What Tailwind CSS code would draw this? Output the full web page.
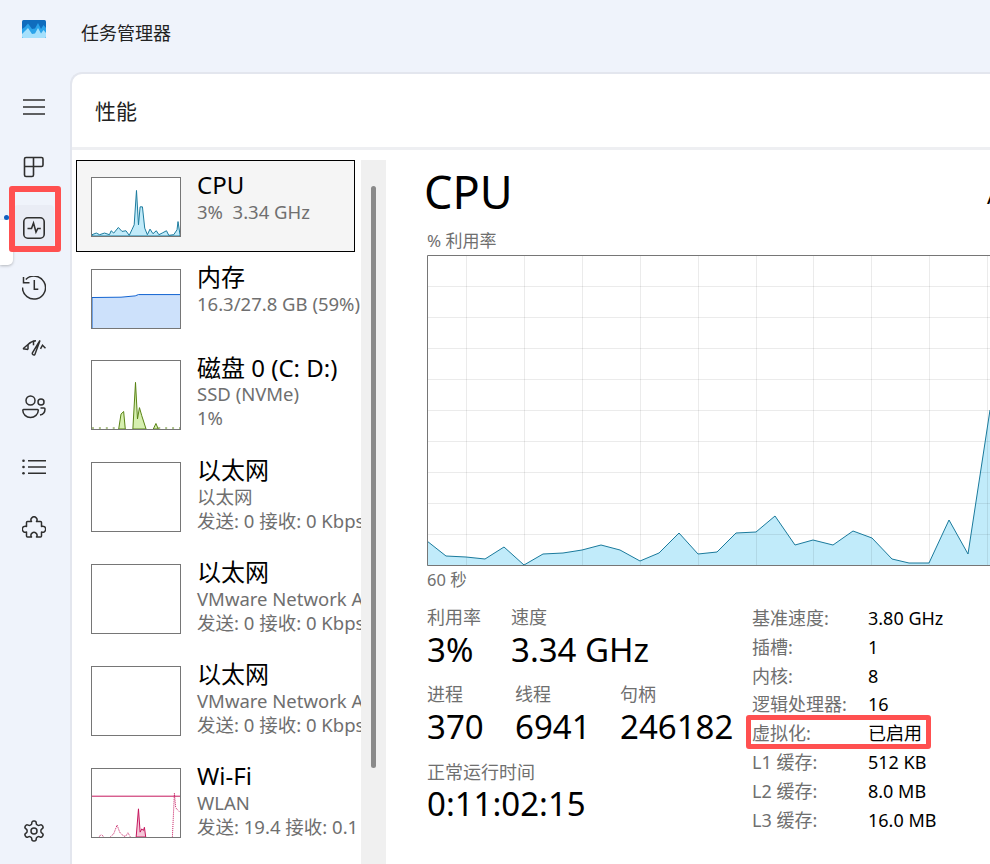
<!DOCTYPE html>
<html lang="zh-CN">
<head>
    <meta charset="UTF-8">
    <title>任务管理器</title>
    <script src="https://cdn.jsdelivr.net/npm/@tailwindcss/browser@4"></script>
</head>
<body class="bg-[#eff3fb]">
<div class="relative w-[990px] h-[864px] overflow-hidden flex flex-col bg-[#eff3fb] text-black font-['Noto_Sans','Noto_Sans_CJK_SC',sans-serif]">

    <!-- title bar -->
    <header class="h-[72px] flex shrink-0">
        <svg class="ml-[22px] mt-[20px] w-[24px] h-[18px]" viewBox="0 0 24 18">
            <rect width="24" height="18" rx="1.500" fill="#0f6cbd"/>
            <path d="M0 9 L3 7 L6 3.500 L10 9 L13 8.500 L16 3 L19 9 L21.500 5 L24 8 V18 H0Z" fill="#2ba3ea"/>
            <path d="M0 14 L3 11 L6 8 L10 14 L13 13.500 L16 8 L19 13.500 L21.500 10 L24 13 V16.500A1.500 1.500 0 0 1 22.500 18H1.500A1.500 1.500 0 0 1 0 16.500Z" fill="#a5e0fc"/>
        </svg>
        <div class="ml-[35px] mt-[21px] text-[18px] leading-[24px] text-[#222]">任务管理器</div>
    </header>

    <div class="flex flex-1 min-h-0">
        <!-- nav rail -->
        <nav class="relative w-[70px] shrink-0 flex flex-col items-center pt-[5px] pb-[3px] pr-[2px] text-[#2f2f2f]">
            <div class="h-[60px] flex items-center justify-center">
                <svg class="w-[24px] h-[24px]" viewBox="0 0 24 24" fill="none" stroke="currentColor" stroke-width="1.5"><path d="M1 5h22M1 12h22M1 19h22"/></svg>
            </div>
            <div class="h-[60px] flex items-center justify-center">
                <svg class="w-[24px] h-[24px]" viewBox="0 0 24 24" fill="none" stroke="currentColor" stroke-width="1.6"><path d="M4 2.500h15.500a1.500 1.500 0 0 1 1.500 1.500v6a1.500 1.500 0 0 1-1.500 1.500H11.500V20a1.500 1.500 0 0 1-1.500 1.500H4A1.500 1.500 0 0 1 2.500 20V4A1.500 1.500 0 0 1 4 2.500zM2.500 11.500h9M11.500 2.500v9"/></svg>
            </div>
            <div class="h-[61px] flex items-center justify-center">
                <div class="w-[40px] h-[46px] rounded-[4px] bg-[#e9ecf5] flex items-center justify-center">
                    <svg class="w-[24px] h-[24px]" viewBox="0 0 24 24" fill="none" stroke="currentColor" stroke-width="1.6"><rect x="1.800" y="1.800" width="20.400" height="20.400" rx="4"/><path d="M5.500 12.500h4l2-5.500 2.500 9 1.800-3.500h3"/></svg>
                </div>
            </div>
            <div class="h-[60px] flex items-center justify-center">
                <svg class="w-[24px] h-[24px]" viewBox="0 0 24 24" fill="none" stroke="currentColor" stroke-width="1.500"><path d="M3.800 3.500A11.500 11.500 0 1 1 .500 11.500"/><path d="M1.500 1v5.800H7.500"/><path d="M12.300 4v9.300h4"/></svg>
            </div>
            <div class="h-[59px] flex items-center justify-center">
                <svg class="w-[24px] h-[24px]" viewBox="0 0 24 24" fill="none" stroke="currentColor" stroke-width="1.500"><path d="M1 12.800 6 8.500C8 6.500 11 5 14 4.800"/><path d="M6 8.500v5"/><path d="M1 12.800l5 .7"/><path d="M18 4.500 10.400 16.800a1.500 1.500 0 0 0 2.500 1.600z"/><path d="M18.500 12.800l2-3.600 3 3"/><path d="M11.500 4.800v4.500"/></svg>
            </div>
            <div class="h-[60px] flex items-center justify-center">
                <svg class="w-[24px] h-[24px]" viewBox="0 0 24 24" fill="none" stroke="currentColor" stroke-width="1.500"><circle cx="8.500" cy="5.500" r="4.500"/><circle cx="19" cy="7" r="3"/><path d="M1.500 14.500h14c.5 0 .8.300.8.800 0 4-3.500 7.200-7.800 7.200S.8 19.300.8 15.300c0-.5.300-.8.700-.8z"/><path d="M18.500 13H22c.600 0 1 .4 1 1 0 3-2 5.500-5 6"/></svg>
            </div>
            <div class="h-[60px] flex items-center justify-center">
                <svg class="w-[24px] h-[24px]" viewBox="0 0 24 24" fill="none" stroke="currentColor" stroke-width="1.600"><path d="M6 5.700h18M6 12h18M6 18.300h18"/><g fill="currentColor" stroke="none"><circle cx="1.500" cy="5.700" r="1.300"/><circle cx="1.500" cy="12" r="1.300"/><circle cx="1.500" cy="18.300" r="1.300"/></g></svg>
            </div>
            <div class="h-[61px] flex items-center justify-center">
                <svg class="w-[24px] h-[24px]" viewBox="0 0 24 24" fill="none" stroke="currentColor" stroke-width="1.500" stroke-linejoin="round"><path d="M5.500 5.500H9.500a3 3 0 1 1 5 0h4a1 1 0 0 1 1 1v4a3 3 0 1 1 0 5.500V20a1 1 0 0 1-1 1H14.500a3 3 0 1 0-5 0H5.500a1 1 0 0 1-1-1v-4a3 3 0 1 1 0-5.500V6.500a1 1 0 0 1 1-1z"/></svg>
            </div>
            <div class="mt-auto h-[60px] flex items-center justify-center">
                <svg class="w-[24px] h-[24px]" viewBox="0 0 24 24" fill="none" stroke="currentColor" stroke-width="1.500"><path d="M12.220 2h-.44a2 2 0 0 0-2 2v.18a2 2 0 0 1-1 1.730l-.43.25a2 2 0 0 1-2 0l-.15-.08a2 2 0 0 0-2.730.73l-.22.38a2 2 0 0 0 .73 2.730l.15.1a2 2 0 0 1 1 1.720v.51a2 2 0 0 1-1 1.740l-.15.09a2 2 0 0 0-.73 2.730l.22.38a2 2 0 0 0 2.730.73l.15-.08a2 2 0 0 1 2 0l.43.25a2 2 0 0 1 1 1.730V20a2 2 0 0 0 2 2h.44a2 2 0 0 0 2-2v-.18a2 2 0 0 1 1-1.730l.43-.25a2 2 0 0 1 2 0l.15.08a2 2 0 0 0 2.730-.73l.22-.39a2 2 0 0 0-.73-2.730l-.15-.08a2 2 0 0 1-1-1.740v-.5a2 2 0 0 1 1-1.740l.15-.09a2 2 0 0 0 .73-2.730l-.22-.38a2 2 0 0 0-2.730-.73l-.15.08a2 2 0 0 1-2 0l-.43-.25a2 2 0 0 1-1-1.730V4a2 2 0 0 0-2-2z"/><circle cx="12" cy="12" r="3"/></svg>
            </div>

            <!-- hover hint, indicator dot and red annotation -->
            <div class="absolute left-0 top-[148px] w-[13px] h-[45px] bg-white rounded-br-[5px] shadow-[0_1px_3px_rgba(0,0,0,0.25)]"></div>
            <div class="absolute left-[4px] top-[143px] w-[5px] h-[5px] rounded-full bg-[#0f5fc0]"></div>
            <div class="absolute left-[9px] top-[114px] w-[52px] h-[66px] border-[6px] border-[#ff5050] rounded-[3px]"></div>
        </nav>

        <!-- main panel -->
        <main class="flex-1 min-w-0 flex flex-col bg-white rounded-tl-[12px] border-l-2 border-t-2 border-[#e3e6ee]">
            <div class="h-[76px] shrink-0 pl-[23px] pt-[23px] text-[21px] leading-[28px] text-[#222] border-b-[3px] border-[#eeeff2]">性能</div>

            <div class="flex flex-1 min-h-0">
                <!-- device list -->
                <div class="ml-[4px] mt-[10px] w-[285px] shrink-0 overflow-hidden">
                    <div class="w-[279px] h-[92px] border border-black bg-[#f5f5f5] pl-[14px] pt-[16px] flex">
                        <svg class="w-[90px] h-[60px] shrink-0 border border-[#767676] bg-white" viewBox="37 82 267 177" preserveAspectRatio="none">
                            <path d="M37 255L50 250 60 255 75 250 90 255 95 243 103 250 117 233 128 245 140 243 150 257 158 240 165 225 172 120 178 225 183 170 190 170 197 235 205 255 213 238 222 252 232 243 240 255 250 250 263 243 270 257 285 255 295 240 298 215 304 255V259H37Z" fill="#c1ebfa" stroke="#1a7a9c" stroke-width="3"/>
                        </svg>
                        <div class="ml-[16px] -mt-[5px] whitespace-nowrap">
                            <div class="text-[24px] leading-[26px]">CPU</div>
                            <div class="mt-[2px] text-[18.5px] leading-[24px] text-[#6f6f6f] whitespace-pre">3%  3.34 GHz</div>
                        </div>
                    </div>

                    <div class="w-[400px] h-[91px] border border-transparent pl-[14px] pt-[16px] flex">
                        <svg class="w-[90px] h-[60px] shrink-0 border border-[#767676] bg-white" viewBox="34 358 267 177" preserveAspectRatio="none">
                            <path d="M34 442L122 441 165 437 175 433 301 433V535H34Z" fill="#cde1fb"/>
                            <path d="M34 535V442L122 441 165 437 175 433 301 433" fill="none" stroke="#0f62d0" stroke-width="3"/>
                        </svg>
                        <div class="ml-[16px] -mt-[5px] whitespace-nowrap">
                            <div class="text-[24px] leading-[26px]">内存</div>
                            <div class="mt-[2px] text-[18.5px] leading-[24px] text-[#6f6f6f]">16.3/27.8 GB (59%)</div>
                        </div>
                    </div>

                    <div class="w-[400px] h-[102px] border border-transparent pl-[14px] pt-[16px] flex">
                        <svg class="w-[90px] h-[70px] shrink-0 border border-[#767676] bg-white" viewBox="34 631 267 210" preserveAspectRatio="none">
                            <path d="M115 841L122 795 130 787 135 841ZM158 841L166 697 172 810 178 775 185 800 198 841ZM220 841L228 824 235 841Z" fill="#d6efb0" stroke="#55800f" stroke-width="3"/>
                            <path d="M34 838H115M235 838H301" fill="none" stroke="#55800f" stroke-width="3" stroke-dasharray="6 15"/>
                        </svg>
                        <div class="ml-[16px] -mt-[5px] whitespace-nowrap">
                            <div class="text-[24px] leading-[26px]">磁盘 0 (C: D:)</div>
                            <div class="mt-[1px] text-[18.5px] leading-[24px] text-[#6f6f6f]">SSD (NVMe)</div>
                            <div class="text-[18.5px] leading-[24px] text-[#6f6f6f]">1%</div>
                        </div>
                    </div>

                    <div class="w-[400px] h-[102px] border border-transparent pl-[14px] pt-[16px] flex">
                        <div class="w-[90px] h-[70px] shrink-0 border border-[#767676] bg-white"></div>
                        <div class="ml-[16px] -mt-[5px] whitespace-nowrap">
                            <div class="text-[24px] leading-[26px]">以太网</div>
                            <div class="mt-[2px] text-[18.5px] leading-[24px] text-[#6f6f6f]">以太网</div>
                            <div class="text-[18.5px] leading-[24px] text-[#6f6f6f]">发送: 0 接收: 0 Kbps</div>
                        </div>
                    </div>

                    <div class="w-[400px] h-[102px] border border-transparent pl-[14px] pt-[16px] flex">
                        <div class="w-[90px] h-[70px] shrink-0 border border-[#767676] bg-white"></div>
                        <div class="ml-[16px] -mt-[5px] whitespace-nowrap">
                            <div class="text-[24px] leading-[26px]">以太网</div>
                            <div class="mt-[2px] text-[18.5px] leading-[24px] text-[#6f6f6f]">VMware Network Adapter</div>
                            <div class="text-[18.5px] leading-[24px] text-[#6f6f6f]">发送: 0 接收: 0 Kbps</div>
                        </div>
                    </div>

                    <div class="w-[400px] h-[102px] border border-transparent pl-[14px] pt-[16px] flex">
                        <div class="w-[90px] h-[70px] shrink-0 border border-[#767676] bg-white"></div>
                        <div class="ml-[16px] -mt-[5px] whitespace-nowrap">
                            <div class="text-[24px] leading-[26px]">以太网</div>
                            <div class="mt-[2px] text-[18.5px] leading-[24px] text-[#6f6f6f]">VMware Network Adapter</div>
                            <div class="text-[18.5px] leading-[24px] text-[#6f6f6f]">发送: 0 接收: 0 Kbps</div>
                        </div>
                    </div>

                    <div class="w-[400px] h-[102px] border border-transparent pl-[14px] pt-[16px] flex">
                        <svg class="w-[90px] h-[70px] shrink-0 border border-[#767676] bg-white" viewBox="34 55 267 210" preserveAspectRatio="none">
                            <path d="M34 139H301" fill="none" stroke="#c4125a" stroke-width="3"/>
                            <path d="M168 265L175 178 180 250 185 240 190 245 193 235 197 265Z" fill="#f5c6d8" stroke="#c4125a" stroke-width="3"/>
                            <path d="M55 264L62 258 70 264M90 264L100 255 110 228 118 250 125 258 135 264 143 252 150 264M278 264L284 130 288 175 300 188" fill="none" stroke="#c4125a" stroke-width="3" stroke-dasharray="3 3"/>
                        </svg>
                        <div class="ml-[16px] -mt-[5px] whitespace-nowrap">
                            <div class="text-[24px] leading-[26px]">Wi-Fi</div>
                            <div class="mt-[2px] text-[18.5px] leading-[24px] text-[#6f6f6f]">WLAN</div>
                            <div class="text-[18.5px] leading-[24px] text-[#6f6f6f]">发送: 19.4 接收: 0.1 Mbps</div>
                        </div>
                    </div>
                </div>

                <!-- scrollbar -->
                <div class="mt-[10px] w-[25px] shrink-0 bg-[#f0f0f0] pl-[10px] pt-[26px]">
                    <div class="w-[5px] h-[582px] rounded-full bg-[#8a8a8a]"></div>
                </div>

                <!-- detail pane -->
                <div class="flex-1 min-w-0 overflow-hidden pl-[41px]">
                    <div class="mt-[14px] h-[56px] flex items-center">
                        <div class="-ml-[3px] w-[563px] shrink-0 text-[45px] leading-[56px]">CPU</div>
                        <div class="text-[24px] leading-[32px] mt-[6px] whitespace-nowrap">AMD Ryzen 7</div>
                    </div>
                    <div class="mt-[11px] text-[17px] leading-[20px] text-[#6f6f6f]">% 利用率</div>
                    <svg class="mt-[4px] w-[563px] h-[312px] block" viewBox="427 255 563 312">
                        <path d="M427 541L446 556 466 557 485 559 504 547 524 565 543 554 563 553 582 550 601 545 620 550 640 561 659 553 679 533 698 554 717 552 736 533 756 532 775 516 795 545 813 540 833 545 853 531 872 538 892 559 909 563 929 563 949 520 968 554 990 410V566H427Z" fill="#c1ebfa"/>
                        <path d="M466.500 255V566M524.500 255V566M582.500 255V566M640.500 255V566M698.500 255V566M756.500 255V566M813.500 255V566M871.500 255V566M929.500 255V566M987.500 255V566M427 286.500H990M427 317.500H990M427 348.500H990M427 379.500H990M427 410.500H990M427 441.500H990M427 472.500H990M427 503.500H990M427 534.500H990" stroke="#000" stroke-opacity="0.08" fill="none"/>
                        <path d="M427 541L446 556 466 557 485 559 504 547 524 565 543 554 563 553 582 550 601 545 620 550 640 561 659 553 679 533 698 554 717 552 736 533 756 532 775 516 795 545 813 540 833 545 853 531 872 538 892 559 909 563 929 563 949 520 968 554 990 410" fill="none" stroke="#1a7a9c"/>
                        <path d="M990 255.500H427.500V565.500H990" fill="none" stroke="#767676"/>
                    </svg>
                    <div class="mt-[3px] text-[16.5px] leading-[20px] text-[#6f6f6f]">60 秒</div>

                    <div class="mt-[14px] flex">
                        <div class="w-[325px] shrink-0 pt-[2px]">
                            <div class="flex">
                                <div class="w-[84px]">
                                    <div class="text-[18px] leading-[22px] text-[#6f6f6f]">利用率</div>
                                    <div class="mt-[2px] text-[33px] leading-[40px]">3%</div>
                                </div>
                                <div>
                                    <div class="text-[18px] leading-[22px] text-[#6f6f6f]">速度</div>
                                    <div class="mt-[2px] text-[33px] leading-[40px] whitespace-nowrap">3.34 GHz</div>
                                </div>
                            </div>
                            <div class="mt-[13px] flex">
                                <div class="w-[88px]">
                                    <div class="text-[18px] leading-[22px] text-[#6f6f6f]">进程</div>
                                    <div class="mt-[2px] text-[33px] leading-[40px]">370</div>
                                </div>
                                <div class="w-[105px]">
                                    <div class="text-[18px] leading-[22px] text-[#6f6f6f]">线程</div>
                                    <div class="mt-[2px] text-[33px] leading-[40px]">6941</div>
                                </div>
                                <div>
                                    <div class="text-[18px] leading-[22px] text-[#6f6f6f]">句柄</div>
                                    <div class="mt-[2px] text-[33px] leading-[40px]">246182</div>
                                </div>
                            </div>
                            <div class="mt-[14px] text-[18px] leading-[22px] text-[#6f6f6f]">正常运行时间</div>
                            <div class="mt-[1px] text-[33px] leading-[40px]">0:11:02:15</div>
                        </div>

                        <div class="w-[238px] shrink-0 text-[18px] leading-[29px]">
                            <div class="flex h-[28.8px]"><div class="w-[116px] text-[#6f6f6f]">基准速度:</div><div>3.80 GHz</div></div>
                            <div class="flex h-[28.8px]"><div class="w-[116px] text-[#6f6f6f]">插槽:</div><div>1</div></div>
                            <div class="flex h-[28.8px]"><div class="w-[116px] text-[#6f6f6f]">内核:</div><div>8</div></div>
                            <div class="flex h-[28.8px]"><div class="w-[116px] text-[#6f6f6f]">逻辑处理器:</div><div>16</div></div>
                            <div class="relative flex h-[28.8px]">
                                <div class="w-[116px] text-[#6f6f6f]">虚拟化:</div><div>已启用</div>
                                <div class="absolute -left-[6px] -top-[4px] w-[185px] h-[34px] border-[5px] border-[#ff5050] rounded-[3px]"></div>
                            </div>
                            <div class="flex h-[28.8px]"><div class="w-[116px] text-[#6f6f6f]">L1 缓存:</div><div>512 KB</div></div>
                            <div class="flex h-[28.8px]"><div class="w-[116px] text-[#6f6f6f]">L2 缓存:</div><div>8.0 MB</div></div>
                            <div class="flex h-[28.8px]"><div class="w-[116px] text-[#6f6f6f]">L3 缓存:</div><div>16.0 MB</div></div>
                        </div>
                    </div>
                </div>
            </div>
        </main>
    </div>
</div>
</body>
</html>
